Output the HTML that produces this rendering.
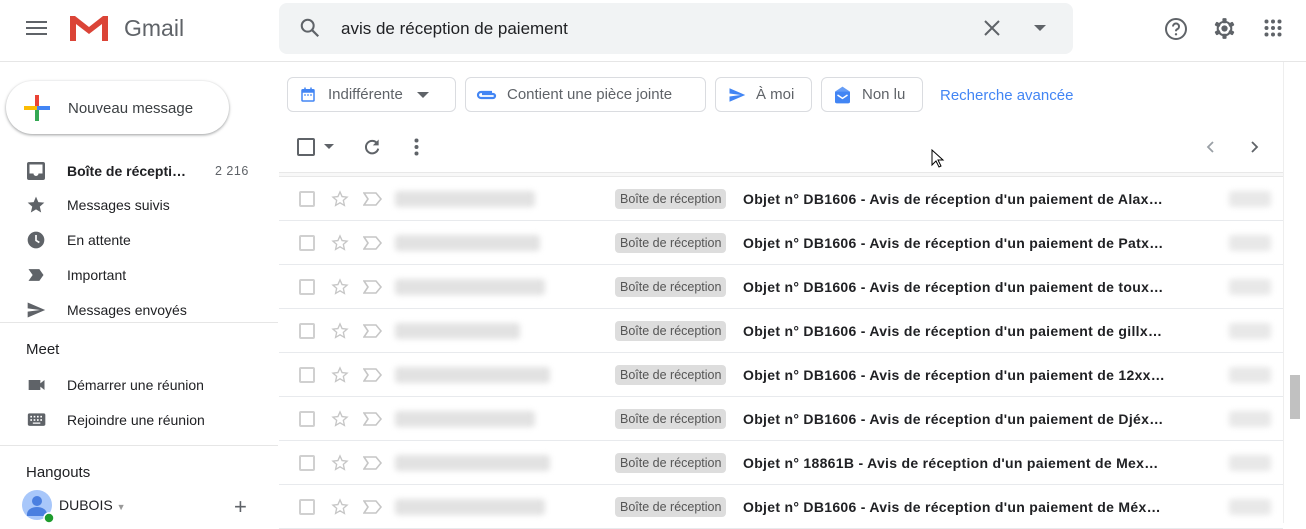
<!DOCTYPE html>
<html><head><meta charset="utf-8"><style>
*{box-sizing:border-box;margin:0;padding:0}
body{width:1306px;height:523px;overflow:hidden;background:#fff;font-family:"Liberation Sans",Arial,sans-serif;color:#202124;position:relative}
.a{position:absolute}
.hdr{top:0;left:0;width:1306px;height:62px;border-bottom:1px solid #e6e6e6}
.search{left:279px;top:3px;width:794px;height:51px;background:#f1f3f4;border-radius:8px}
.nav{left:0;width:278px;height:35px;font-size:14px;display:flex;align-items:center}
.nav .ic{position:absolute;left:26px;top:8px}
.nav span{position:absolute;left:67px}
.chip{top:77px;height:35px;border:1px solid #dadce0;border-radius:6px;font-size:15px;color:#5f6368;display:flex;align-items:center}
.row{left:279px;width:1004px;height:44px;border-bottom:1px solid #e8eaed}
.cb{position:absolute;left:20px;top:14px;width:16px;height:16px;border:2px solid #d0d0d0;border-radius:2px}
.blur{position:absolute;background:#e2e2e2;filter:blur(3px);height:16px;border-radius:3px}
.lbl{position:absolute;left:336px;top:12px;height:20px;background:#dddddd;border-radius:4px;font-size:12.5px;color:#555;padding:0 5px;line-height:20px}
.subj{position:absolute;left:464px;top:14px;font-size:14px;font-weight:bold;width:422px;white-space:nowrap;overflow:hidden;text-overflow:ellipsis;letter-spacing:.3px}
</style></head><body>
<div class="a hdr"></div>
<svg class="a" style="left:26px;top:20px" width="22" height="16"><rect y="1" width="21" height="2" fill="#5f6368"/><rect y="7" width="21" height="2" fill="#5f6368"/><rect y="13" width="21" height="2" fill="#5f6368"/></svg>
<svg class="a" style="left:68px;top:13px" width="42" height="30" viewBox="0 0 42 30"><path d="M2 3h5l14 11L35 3h5v25h-6V11L21 21 8 11v17H2z" fill="#db4437"/></svg>
<div class="a" style="left:124px;top:15px;font-size:23px;color:#5f6368">Gmail</div>
<div class="a search"></div>
<svg class="a" style="left:299px;top:17px" width="22" height="22" viewBox="0 0 24 24"><circle cx="9.5" cy="9.5" r="6.5" fill="none" stroke="#5f6368" stroke-width="2.2"/><path d="M14.5 14.5l6.5 6.5" stroke="#5f6368" stroke-width="2.4"/></svg>
<div class="a" style="left:341px;top:19px;font-size:17px">avis de réception de paiement</div>
<svg class="a" style="left:984px;top:20px" width="16" height="16"><path d="M1 1l14 14M15 1L1 15" stroke="#5f6368" stroke-width="2"/></svg>
<svg class="a" style="left:1034px;top:25px" width="12" height="7"><path d="M0 0h12L6 6z" fill="#5f6368"/></svg>
<svg class="a" style="left:1164px;top:17px" width="24" height="24" viewBox="0 0 24 24"><circle cx="12" cy="12" r="10" fill="none" stroke="#5f6368" stroke-width="2"/><path d="M9 9.5a3 3 0 1 1 4 2.8c-.8.4-1 1-1 2" fill="none" stroke="#5f6368" stroke-width="2"/><circle cx="12" cy="17.3" r="1.2" fill="#5f6368"/></svg>
<svg class="a" style="left:1212px;top:16px" width="25" height="25" viewBox="0 0 24 24"><g transform="translate(12 12)"><g fill="none" stroke="#5f6368" stroke-width="2"><circle r="6.5"/></g><g fill="#5f6368"><rect x="-2" y="-10" width="4" height="5" rx="1"/><rect x="-2" y="5" width="4" height="5" rx="1"/><rect x="-2" y="-10" width="4" height="5" rx="1" transform="rotate(60)"/><rect x="-2" y="-10" width="4" height="5" rx="1" transform="rotate(120)"/><rect x="-2" y="-10" width="4" height="5" rx="1" transform="rotate(240)"/><rect x="-2" y="-10" width="4" height="5" rx="1" transform="rotate(300)"/><circle r="3"/></g></g></svg>
<svg class="a" style="left:1264px;top:19px" width="18" height="18"><g fill="#5f6368"><circle cx="2.5" cy="2.5" r="2"/><circle cx="9" cy="2.5" r="2"/><circle cx="15.5" cy="2.5" r="2"/><circle cx="2.5" cy="9" r="2"/><circle cx="9" cy="9" r="2"/><circle cx="15.5" cy="9" r="2"/><circle cx="2.5" cy="15.5" r="2"/><circle cx="9" cy="15.5" r="2"/><circle cx="15.5" cy="15.5" r="2"/></g></svg>

<div class="a" style="left:6px;top:81px;width:223px;height:53px;border-radius:27px;box-shadow:0 1px 3px rgba(60,64,67,.35),0 1px 2px rgba(60,64,67,.2);background:#fff"></div>
<svg class="a" style="left:23px;top:94px" width="28" height="28"><rect x="12" y="1" width="4" height="13" fill="#ea4335"/><rect x="12" y="14" width="4" height="13" fill="#34a853"/><rect x="1" y="12" width="13" height="4" fill="#fbbc04"/><rect x="14" y="12" width="13" height="4" fill="#4285f4"/></svg>
<div class="a" style="left:68px;top:100px;font-size:15px;color:#3c4043">Nouveau message</div>

<div class="a nav" style="top:153px"><svg class="ic" width="20" height="20"><rect x="1" y="1" width="18" height="18" rx="2" fill="#5f6368"/><rect x="3.5" y="3.5" width="13" height="9" fill="#fff"/><path d="M3.5 12.5h4a2.5 2.5 0 0 0 5 0h4" fill="#fff"/></svg><span style="font-weight:bold">Boîte de récepti…</span><b style="position:absolute;left:215px;font-weight:normal;font-size:12.5px;color:#5f6368;letter-spacing:.5px">2 216</b></div>
<div class="a nav" style="top:187px"><svg class="ic" width="20" height="20" viewBox="0 0 24 24"><path fill="#5f6368" d="M12 17.3l6.2 3.7-1.6-7L22 9.2l-7.2-.6L12 2 9.2 8.6 2 9.2 7.5 14l-1.7 7z"/></svg><span>Messages suivis</span></div>
<div class="a nav" style="top:222px"><svg class="ic" width="20" height="20" viewBox="0 0 24 24"><circle cx="12" cy="12" r="10" fill="#5f6368"/><path d="M12 6v6.5l4 2.5" stroke="#fff" stroke-width="2" fill="none"/></svg><span>En attente</span></div>
<div class="a nav" style="top:257px"><svg class="ic" width="20" height="20" viewBox="0 0 24 24"><path fill="#5f6368" d="M3 5h13l5 7-5 7H3l5-7z"/></svg><span>Important</span></div>
<div class="a nav" style="top:292px"><svg class="ic" width="20" height="20" viewBox="0 0 24 24"><path fill="#5f6368" d="M2 21l21-9L2 3v7l15 2-15 2z"/></svg><span>Messages envoyés</span></div>
<div class="a" style="left:0;top:322px;width:278px;border-top:1px solid #e6e6e6"></div>
<div class="a" style="left:26px;top:341px;font-size:15px">Meet</div>
<div class="a nav" style="top:367px"><svg class="ic" width="22" height="20" viewBox="0 0 24 24"><path fill="#5f6368" d="M2 6h14v12H2zM16 10l5-4v12l-5-4z"/></svg><span>Démarrer une réunion</span></div>
<div class="a nav" style="top:402px"><svg class="ic" width="22" height="20" viewBox="0 0 24 24"><rect x="1" y="4" width="21" height="15" rx="2" fill="#5f6368"/><g fill="#fff"><rect x="4" y="7" width="2" height="2"/><rect x="8" y="7" width="2" height="2"/><rect x="12" y="7" width="2" height="2"/><rect x="16" y="7" width="2" height="2"/><rect x="4" y="11" width="2" height="2"/><rect x="8" y="11" width="2" height="2"/><rect x="12" y="11" width="2" height="2"/><rect x="16" y="11" width="2" height="2"/><rect x="7" y="15" width="9" height="1.5"/></g></svg><span>Rejoindre une réunion</span></div>
<div class="a" style="left:0;top:445px;width:278px;border-top:1px solid #e6e6e6"></div>
<div class="a" style="left:26px;top:464px;font-size:15px">Hangouts</div>
<svg class="a" style="left:22px;top:490px" width="34" height="33"><circle cx="15" cy="15" r="15" fill="#a8c7fa"/><circle cx="15" cy="11" r="5" fill="#4a7fe0"/><path d="M5 24a10 7 0 0 1 20 0v2H5z" fill="#4a7fe0"/><circle cx="27" cy="28" r="5" fill="#1e9c2e" stroke="#fff" stroke-width="1.5"/></svg>
<div class="a" style="left:59px;top:497px;font-size:14px">DUBOIS <span style="color:#999;font-size:9px">▼</span></div>
<div class="a" style="left:234px;top:494px;font-size:22px;color:#5f6368">+</div>

<div class="a chip" style="left:287px;width:169px"><svg style="margin-left:11px" width="18" height="18" viewBox="0 0 24 24"><rect x="3" y="4" width="18" height="17" rx="2" fill="#4285f4"/><rect x="5" y="9" width="14" height="10" fill="#fff"/><rect x="7" y="2" width="2" height="4" fill="#4285f4"/><rect x="15" y="2" width="2" height="4" fill="#4285f4"/><g fill="#4285f4"><rect x="7" y="11" width="2" height="2"/><rect x="11" y="11" width="2" height="2"/><rect x="15" y="11" width="2" height="2"/></g></svg><span style="margin-left:11px">Indifférente</span><svg style="margin-left:14px" width="12" height="6"><path d="M0 0h12L6 6z" fill="#5f6368"/></svg></div>
<div class="a chip" style="left:465px;width:241px"><svg style="margin-left:10px" width="22" height="14" viewBox="0 0 22 14"><path d="M16 4H5a3 3 0 0 0 0 6h12a2 2 0 0 0 0-4H6" fill="none" stroke="#4285f4" stroke-width="2.2"/></svg><span style="margin-left:9px">Contient une pièce jointe</span></div>
<div class="a chip" style="left:715px;width:97px"><svg style="margin-left:11px" width="20" height="18" viewBox="0 0 24 24"><path fill="#4285f4" d="M2 21l21-9L2 3v7l15 2-15 2z"/></svg><span style="margin-left:9px">À moi</span></div>
<div class="a chip" style="left:821px;width:102px"><svg style="margin-left:10px" width="21" height="20" viewBox="0 0 24 24"><path fill="#669df6" d="M3 8l9-6 9 6v2H3z"/><rect x="3" y="8" width="18" height="14" rx="2" fill="#4285f4"/><path d="M6 12l6 4 6-4" stroke="#fff" stroke-width="1.8" fill="none"/></svg><span style="margin-left:9px">Non lu</span></div>
<div class="a" style="left:940px;top:87px;font-size:15px;color:#4285f4">Recherche avancée</div>

<div class="a" style="left:297px;top:138px;width:18px;height:18px;border:2px solid #5f6368;border-radius:2px"></div>
<svg class="a" style="left:324px;top:144px" width="10" height="5"><path d="M0 0h10L5 5z" fill="#5f6368"/></svg>
<svg class="a" style="left:362px;top:137px" width="20" height="20" viewBox="0 0 24 24"><path d="M18.5 8A7.5 7.5 0 1 0 19.5 14" fill="none" stroke="#5f6368" stroke-width="2.4"/><path d="M20 3v7h-7z" fill="#5f6368"/></svg>
<svg class="a" style="left:414px;top:138px" width="5" height="18"><circle cx="2.5" cy="2.5" r="2" fill="#5f6368"/><circle cx="2.5" cy="9" r="2" fill="#5f6368"/><circle cx="2.5" cy="15.5" r="2" fill="#5f6368"/></svg>
<svg class="a" style="left:1206px;top:141px" width="8" height="12"><path d="M7 1L2 6l5 5" fill="none" stroke="#9aa0a6" stroke-width="1.8"/></svg>
<svg class="a" style="left:1251px;top:141px" width="8" height="12"><path d="M1 1l5 5-5 5" fill="none" stroke="#5f6368" stroke-width="1.8"/></svg>
<svg class="a" style="left:931px;top:149px" width="14" height="20"><path d="M1 1v15l4-4 3 6 2-1-3-6h5z" fill="#fff" stroke="#000" stroke-width="1"/></svg>
<div class="a" style="left:279px;top:172px;width:1004px;height:5px;border-top:1px solid #e8e8e8;border-bottom:1px solid #e8e8e8;background:#f8f8f8"></div>

<div class="a" style="left:1283px;top:62px;width:1px;height:461px;background:#eee"></div>
<div class="a" style="left:1290px;top:375px;width:10px;height:44px;background:#c1c1c1"></div>

<div id="rows"></div>
<script>
var s=["Ala…","Pat…","tou…","gill…","12…","Djé…","Me…","Mé…"],ids=["DB1606","DB1606","DB1606","DB1606","DB1606","DB1606","18861B","DB1606"],w=[140,145,150,125,155,140,155,150];
var h="";for(var i=0;i<8;i++){var t=177+i*44;h+='<div class="a row" style="top:'+t+'px"><div class="cb"></div><svg style="position:absolute;left:51px;top:12px" width="20" height="20" viewBox="0 0 24 24"><path fill="none" stroke="#c6c6c6" stroke-width="1.6" d="M12 3.5l2.5 5.6 6 .6-4.5 4 1.3 6L12 16.6l-5.3 3.1 1.3-6-4.5-4 6-.6z"/></svg><svg style="position:absolute;left:84px;top:15px" width="20" height="14"><path fill="none" stroke="#c6c6c6" stroke-width="1.6" d="M1 1h12l5 6-5 6H1l4-6z"/></svg><div class="blur" style="left:116px;top:14px;width:'+w[i]+'px"></div><div class="lbl">Boîte de réception</div><div class="subj">Objet n° '+ids[i]+' - Avis de réception d\'un paiement de '+s[i].replace("…","xxxxxxxx")+'</div><div class="blur" style="left:950px;top:14px;width:42px;background:#e8e8e8"></div></div>';}
document.getElementById("rows").innerHTML=h;
</script>
</body></html>
